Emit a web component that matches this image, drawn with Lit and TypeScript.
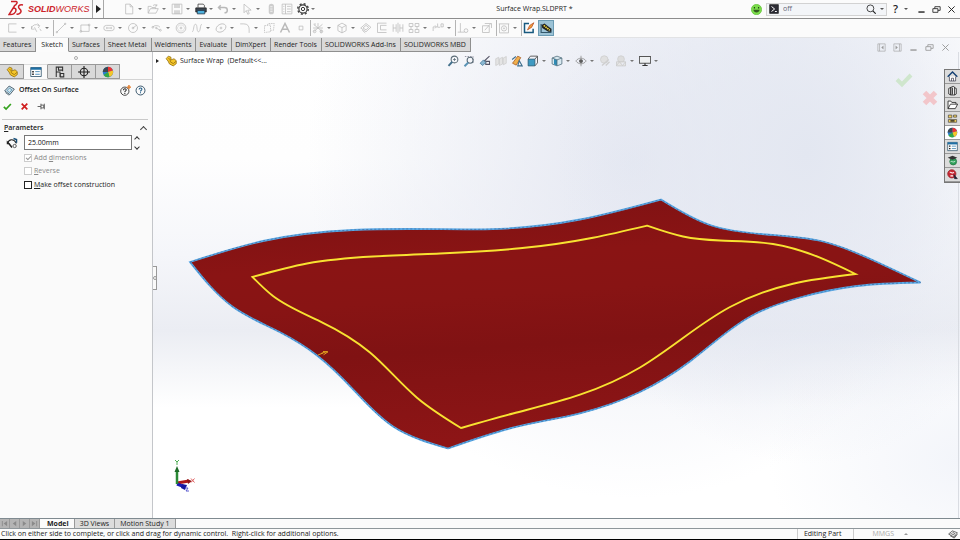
import { LitElement, html, svg, css, nothing } from "lit";
import { customElement, property } from "lit/decorators.js";
import { classMap } from "lit/directives/class-map.js";

type Pt = [number, number];

/* Natural cubic spline through unevenly spaced points; returned without the leading move. */
function curve(p: Pt[]): string {
  const n = p.length - 1;
  const seg = p.slice(1).map((q, i) => Math.hypot(q[0] - p[i][0], q[1] - p[i][1]));
  const tangents = (k: 0 | 1) => {
    const s = seg.map((h, i) => (p[i + 1][k] - p[i][k]) / h);
    const m = [...s, s[n - 1]];
    for (let pass = 0; pass < 40; pass++) {
      m[0] = (3 * s[0] - m[1]) / 2;
      for (let i = 1; i < n; i++) {
        const a = seg[i - 1];
        const b = seg[i];
        m[i] = (3 * (b * s[i - 1] + a * s[i]) - b * m[i - 1] - a * m[i + 1]) / (2 * (a + b));
      }
      m[n] = (3 * s[n - 1] - m[n - 1]) / 2;
    }
    return m;
  };
  const mx = tangents(0);
  const my = tangents(1);
  return seg
    .map((len, i) => {
      const h = len / 3;
      const [b, c] = [p[i], p[i + 1]];
      return `C${(b[0] + mx[i] * h).toFixed(2)} ${(b[1] + my[i] * h).toFixed(2)} `
        + `${(c[0] - mx[i + 1] * h).toFixed(2)} ${(c[1] - my[i + 1] * h).toFixed(2)} ${c[0]} ${c[1]}`;
    })
    .join("");
}
const outline = (sides: Pt[][]) => `M${sides[0][0].join(" ")}${sides.map(curve).join("")}Z`;

const EDGE = outline([
  [[190, 262], [263, 241], [353, 230], [440, 229.2], [500, 228.8], [580, 219.5], [661, 199.5]],
  [[661, 199.5], [710, 225], [767, 234.5], [823, 241.5], [877, 262], [920.5, 282.5]],
  [[920.5, 282.5], [857, 286], [800, 297.5], [750, 316.7], [690, 361.5], [640, 392], [580, 413.3], [513, 427.7], [448, 448.5]],
  [[448, 448.5], [393, 426.5], [353, 389.3], [317, 355.5], [280, 332.3], [233, 307], [190, 262]],
]);
const OFFSET = outline([
  [[252.5, 277], [307, 263.5], [373, 256.5], [440, 253.5], [520, 248.3], [593, 237.7], [647, 225.7]],
  [[647, 225.7], [683, 236.5], [720, 240.5], [773, 244], [820, 257.7], [855.5, 274]],
  [[855.5, 274], [793, 283.7], [730, 307], [683, 338], [640, 367.500], [580, 394.7], [513, 413.5], [461, 428]],
  [[461, 428], [417, 397.7], [370, 352.5], [320, 321.3], [273, 296], [252.5, 277]],
]);

const ICONS: Record<string, unknown> = {
  doc: svg`<path d="M3.500 1.500h6l3.500 3.500v9.500H3.500zM9.500 1.500v3.500H13"/>`,
  open: svg`<path d="M1.500 13.500v-9h4l1 1.500h5v2M1.500 13.500l3-6h10.500l-3 6zM8 3.500c2-2 4-1.500 5 .5M13 1.500V4h-2.500"/>`,
  save: svg`<path d="M1.500 1.500h13v13h-13z"/><path class="f" d="M4 1.500h8v5H4zM4 9.500h8v5H4z" opacity=".55"/>`,
  print: svg`<path d="M4 6V1.500h7l1.500 1.500v3" stroke="#333"/><path d="M1 6.500h14v5.500H1z" fill="#3c4650" stroke="#222"/><path d="M3 10h10v4.500H3z" fill="#4db0dd" stroke="#234"/>`,
  undo: svg`<path d="M5 3L2 6l3 3M2 6h8c5 0 5 7 0 7" stroke-width="2"/>`,
  pointer: svg`<path d="M4 1.500v11.500l3-3 2 5 2-1-2-4.500h4.500z"/>`,
  traffic: svg`<rect x="5" y="1" width="7" height="14" rx="3.500" class="f" opacity=".7"/><path d="M7 5h3M7 8h3M7 11h3" stroke="#fff"/>`,
  list: svg`<path d="M1.500 1.500h13v13h-13zM6 1.500v13M3 4.500h1.500M3 8h1.500M3 11.500h1.500M8 4.500h5M8 8h5M8 11.500h5"/>`,
  gear: svg`<circle cx="8" cy="8" r="5.500" stroke="#333" stroke-width="1.500"/><circle cx="8" cy="8" r="2.200" stroke="#333" stroke-width="1.300"/><circle cx="8" cy="8" r="7" stroke="#444" stroke-width="2" stroke-dasharray="2.700 2.800"/>`,
  profile: svg`<path d="M14 2.500H3.500v11H14"/>`,
  dims: svg`<path d="M2 9a6 6 0 0 1 10-4M2 5.500V9.500h4M6 7l3 6M10 2l3 3-2 3M13 9l2 3"/>`,
  line: svg`<path d="M2 14L14 2"/><circle cx="2.500" cy="13.500" r="1"/><circle cx="13.500" cy="2.500" r="1"/>`,
  rect: svg`<path d="M2.500 4h11v8.500h-11z"/><circle cx="2.500" cy="12.500" r="1.200"/><circle cx="13.500" cy="4" r="1.200"/>`,
  slot: svg`<rect x="1" y="4.500" width="14" height="7" rx="3.500"/><path d="M5 8h6M5 6.500v3M11 6.500v3"/>`,
  circle: svg`<circle cx="8" cy="8" r="6"/><circle cx="8" cy="8" r="1.200"/><path d="M8 8l5-4"/>`,
  arc: svg`<path d="M2 7a6 5 0 0 1 10 0M7 8l5 3"/><circle cx="2.500" cy="7" r="1.200"/><circle cx="12.500" cy="11" r="1.200"/><circle cx="7" cy="8" r="1"/>`,
  poly: svg`<circle cx="8" cy="8" r="6.500"/><path d="M5.500 4h5l2.500 4-2.500 4h-5L3 8z" opacity=".5"/><circle cx="8" cy="8" r="1.200"/>`,
  spline: svg`<path d="M1.500 13C4 13 3 3 6 3s1 10 4 10 2-10 4.500-10"/>`,
  ellipse: svg`<ellipse cx="8" cy="8" rx="7" ry="5" transform="rotate(-30 8 8)"/><circle cx="8" cy="8" r="1.200"/>`,
  fillet: svg`<path d="M1.500 2.500h5c5 0 7 3 7 7v5"/>`,
  plane: svg`<path d="M2 5l8-1v9l-8 1zM6 4l1-2h8l-1 9h-3" stroke-dasharray="2 1"/>`,
  letter: svg`<path d="M2 14L8 2l6 12M4.500 9.500h7" stroke-width="2"/>`,
  point: svg`<path d="M5.500 5.500h5v5h-5z"/>`,
  trim: svg`<path d="M2 3l12 10M2 13L14 3M1.500 8h13M8 1.500v5M4 1.500v3M12 11v4"/><circle cx="3.500" cy="12.500" r="1.800"/><circle cx="12.500" cy="12.500" r="1.800"/>`,
  cube: svg`<path d="M2.500 4.500L8 1.500l5.500 3v7L8 14.500l-5.500-3zM2.500 4.500L8 7.500l5.500-3M8 7.500v7"/>`,
  offsetPlane: svg`<path d="M1 8l7-6 6.500 5L8 13zM4 8l4-3.500L11.500 7 8 10.500zM3 11l4 3.500"/>`,
  offset: svg`<path d="M14 1.500H2v12.500h12M14 4.500H6v6h8"/>`,
  mirror: svg`<path d="M8 1v14M1.500 3v10M5.500 3v10M1.500 8h4M10.500 3v10M14.500 3v10M10.500 8h4"/>`,
  pattern: svg`<path d="M1.500 2h5v4h-5zM9.500 2h5v4h-5zM1.500 10h5v4h-5zM9.500 10h5v4h-5zM4 6v4M12 6v4"/>`,
  move: svg`<path d="M1.500 12V6.500H6M4 4.500l2 2-2 2M7.500 2v5h3.500M12 2.500h3v4h-3z"/>`,
  relation: svg`<path d="M4.500 1.500v12M1 13.500h9"/><circle cx="12" cy="11.500" r="2.500"/>`,
  repair: svg`<path d="M2 5h9v9H2zM5 11l8-9M5 2h9v6"/>`,
  snap: svg`<path d="M1 2.500h14M2 2.500v12h12v-12"/><circle cx="8" cy="8.500" r="3.500"/><circle cx="8" cy="8.500" r=".8"/>`,
  rapid: svg`<path d="M8 2H2v12h11.500V9" stroke="#17597f" stroke-width="2"/><path d="M6 10.500l3-6 5.500-3.500-3 6z" fill="#f2a23a" stroke="#b8491d"/>`,
  instant: svg`<path d="M1.500 2.500v11.500h13V9" stroke="#33586b" stroke-width="1.500"/><path d="M2 4l4-2 9 7v4h-4L3 8z" fill="#222" stroke="none"/><path d="M5 4.500l8 6.500" stroke="#f4dc3a" stroke-width="2.200" stroke-dasharray="2 1"/>`,
  part: svg`<path d="M1.500 5l3-3.500L8 3v3.500l4-1.500 3 2.500v4L11 14.500 6 12l-2-4z" fill="#f5c629" stroke="#8d6a0c"/><path d="M4.500 4.500L7 6v3l4 2.500 3.500-3" stroke="#8d6a0c"/>`,
  props: svg`<path d="M1 2h14v12H1z" fill="#fff" stroke="#1f4660"/><path d="M1 3.500h14" stroke="#1d6fa5" stroke-width="3"/><path d="M3 7.500h2M3 11h2" stroke="#111" stroke-width="2"/><path d="M7 7.500h6M7 11h6" stroke="#1d6fa5"/>`,
  config: svg`<path d="M3 14.500V1.500h8.500v5.500M3 8h5v6.500M6 1.500v4h5.500M8.500 10h4.500v4.500H8.500z" stroke="#333" stroke-width="1.400"/>`,
  target: svg`<circle cx="8" cy="8" r="5" stroke="#222" stroke-width="1.500"/><path d="M8 0v16M0 8h16" stroke="#222" stroke-width="1.500"/>`,
  ball: svg`<circle cx="8" cy="8" r="7" fill="#2b7fd0" stroke="none"/><path d="M8 8V1a7 7 0 0 0-7 7z" fill="#3d4852" stroke="none"/><path d="M8 8V1a7 7 0 0 1 6.500 5z" fill="#e33" stroke="none"/><path d="M8 8l6.500-2A7 7 0 0 1 10 14.700z" fill="#f5c629" stroke="none"/><path d="M8 8l2 6.700A7 7 0 0 1 2 12z" fill="#35a845" stroke="none"/>`,
  surf: svg`<path d="M1 8.500L7.500 1.500 15 6l-6.500 8z" fill="#d5e6ee" stroke="#2f4a5b" stroke-width="1.200"/><path d="M4.500 8L8 4.500 11.500 7 8 11z" stroke="#2f7ca5"/><path d="M2 11l5.500 4" stroke="#2f4a5b"/>`,
  helpNew: svg`<circle cx="7" cy="9" r="6" stroke="#333" stroke-width="1.300"/><path d="M5 7.500c0-3 4.500-2.500 4 0-.3 1.200-2 1.300-2 3M7 11.500v1.500" stroke="#222" stroke-width="1.500"/><path d="M13 0v6M10 3h6" stroke="#e07a28" stroke-width="2"/>`,
  help: svg`<circle cx="8" cy="8" r="6.500" stroke="#26465c" stroke-width="1.300"/><path d="M6 6.500c0-3 4.500-2.500 4 0-.3 1.200-2 1.300-2 3M8 10.500v1.500" stroke="#1c5a86" stroke-width="1.500"/>`,
  tick: svg`<path d="M1.500 8.500l4 4L14 3.500" stroke="#34a21d" stroke-width="3"/>`,
  cancel: svg`<path d="M3 3l10 10M13 3L3 13" stroke="#cf1d1d" stroke-width="3"/>`,
  pin: svg`<path d="M1 8h6M7 3v10M7 5.500h5v5H7M13 3v10" stroke="#555" stroke-width="1.600"/>`,
  measure: svg`<path d="M2 8.500c2-6 8-7 12 0" stroke="#222" stroke-width="1.500"/><path d="M1 4.500v5h5z" fill="#222" stroke="none"/><path d="M10 2l4 1.500v4" stroke="#174f78" stroke-width="2"/><path d="M4 9l4 5" stroke="#222" stroke-width="2"/><circle cx="11.500" cy="12" r="2.200" stroke="#555" stroke-width="1.300"/>`,
  zoomFit: svg`<circle cx="10" cy="6" r="4.500" stroke="#5a6b76" stroke-width="1.400"/><path d="M7 9l-5 5.500" stroke="#43708c" stroke-width="2.500"/><path d="M8 6h4M10 4v4" stroke="#5a6b76"/>`,
  zoomArea: svg`<path d="M2.500 2h11v10" stroke="#778" stroke-dasharray="2 1.500"/><circle cx="9.500" cy="7" r="4" stroke="#5a6b76" stroke-width="1.400"/><path d="M7 10l-5 5" stroke="#5a93b5" stroke-width="2.500"/>`,
  prev: svg`<path d="M6 9L14 1.500M9 8.500h5v4H9z" stroke="#556" stroke-width="1.400"/><path d="M1.500 11l4.500-4.500 3 3.500-4 4z" fill="#8bb8d2" stroke="#3f7595"/>`,
  section: svg`<path d="M1 5l4-2v9l-4 2zM6 5l4-2v9l-4 2zM11 4l4-2v9l-4 2z" fill="#e4e4e4" stroke="#ccc"/>`,
  dynamic: svg`<path d="M2 11l7-9.500 4 2-6 10z" fill="#f0b04c" stroke="#a5571e"/><path d="M9 14.500l2-7 4 7zM1.500 6l5-4" stroke="#3c6d8c" stroke-width="1.400"/>`,
  orient: svg`<path d="M1.500 5.500h9v9h-9z" fill="#3f9ac2" stroke="#24566f"/><path d="M1.500 5.500l3-4H14v9l-3.500 4M10.500 5.500L14 1.500" stroke="#555" stroke-width="1.200"/>`,
  style: svg`<path d="M1.500 4L8 1.500 14.500 4v8L8 14.500 1.500 12z" fill="#d8e8ef" stroke="#4a6878"/><path d="M4 5l4 1.500v7.500l-4-1.500z" fill="#2f8bb5" stroke="none"/><path d="M1.500 4L8 6.500 14.500 4M8 6.500v8" stroke="#4a6878"/>`,
  eye: svg`<path d="M1 8c4-5 10-5 14 0-4 5-10 5-14 0z" stroke="#888"/><circle cx="8" cy="8" r="2.500" fill="#444" stroke="none"/><path d="M8 1v14" stroke="#888"/>`,
  paint: svg`<circle cx="7" cy="6" r="5" fill="#e0e0e0" stroke="#ccc"/><path d="M4 14l9-8M9 14l5-5" stroke="#cfcfcf" stroke-width="2"/>`,
  scene: svg`<circle cx="8" cy="5.500" r="4.500" fill="#ddd" stroke="#ccc"/><path d="M2 9h12v5.500H2zM2 14l4-5 4 5 4-5" fill="#e6e6e6" stroke="#c8c8c8"/>`,
  monitor: svg`<path d="M.5 2h15v9H.5z" fill="#eef0f2" stroke="#555" stroke-width="1.400"/><path d="M8 11v3M4.500 14h7" stroke="#333" stroke-width="1.600"/>`,
  home: svg`<path d="M1 8.500L8 1.500l7 7" stroke="#123f73" stroke-width="2"/><path d="M3.500 8v6.500h9V8" fill="#fff" stroke="#334"/><path d="M6.500 14.500v-4h3v4" stroke="#334"/>`,
  library: svg`<path d="M2.500 5l3-1.500v11l-3-1.500zM5.500 3.500L9 2l2 1v11.500l-5.500 0zM11 4l2.500 1v8L11 14.500M8 4v10" fill="#eee" stroke="#222" stroke-width="1.200"/>`,
  folder: svg`<path d="M1.500 14V3h4l1.500 2h6v2.500M1.500 14L5 7.500h10.500L12 14z" fill="#fff" stroke="#222" stroke-width="1.200"/>`,
  palette: svg`<path d="M2 3h5v4H2zM9.500 3h4.500v3H9.500zM2 9.500h12v4H2z" fill="#f3cf5a" stroke="#444"/><path d="M5 11.500h6" stroke="#222" stroke-width="2"/>`,
  study: svg`<circle cx="9" cy="9.500" r="5" fill="#2fa35b" stroke="#1e6e3c"/><path d="M1 4l7-3 7 3-7 3z" fill="#333" stroke="none"/><path d="M5 10c2-2 4 2 7-1" stroke="#fff"/>`,
  forum: svg`<circle cx="7" cy="7" r="6" fill="#c92a35" stroke="#8e1720"/><path d="M4 5c2-2 3 3 6 0M5 10h4" stroke="#fff" stroke-width="1.500"/><path d="M10 8l5 6h-4z" fill="#223" stroke="#223"/>`,
  prevPane: svg`<path d="M1.500 1.500h13v13h-13zM4.500 1.500v13"/><path d="M11.500 4.500v7L7.500 8z" class="f"/>`,
  nextPane: svg`<path d="M1.500 1.500h13v13h-13zM11.500 1.500v13"/><path d="M4.500 4.500v7L8.500 8z" class="f"/>`,
  min: svg`<path d="M2.500 12.500h11" stroke-width="2.500"/>`,
  restore: svg`<path d="M1.500 6.500h9v6.500h-9zM5 6.500V3h9.500v6.500h-4" stroke-width="1.500"/>`,
  close: svg`<path d="M2.500 2.500l11 11M13.500 2.500l-11 11" stroke-width="1.700"/>`,
  search: svg`<circle cx="7" cy="7" r="5.500" stroke-width="1.300"/><path d="M11 11l4.500 4.500" stroke-width="1.800"/>`,
  smile: svg`<circle cx="8" cy="8" r="7.500" fill="#7bdc4b" stroke="#63c03a"/><path d="M3.500 8.500h9c-.5 5-8.500 5-9 0z" fill="#31591f" stroke="none"/><path d="M5 4.500v2M11 4.500v2" stroke="#234a17" stroke-width="1.700"/>`,
  prompt: svg`<path d="M1 1h14v14H1z" fill="#2d2d35" stroke="#111"/><path d="M4 4l5 4-5 4M9.500 12h3" stroke="#fff" stroke-width="1.600"/>`,
  sheets: svg`<path d="M1 8l6-5 8 3-5 7zM3 10.500l7 4 5-6M4 7l7 3M7 5l5 3" stroke="#444" stroke-width="1.200"/>`,
};

const icon = (name: string) =>
  html`<svg class="icon" viewBox="0 0 16 16" aria-hidden="true">${ICONS[name]}</svg>`;

const iconCss = css`
  .icon { width: 12px; height: 12px; flex: none; display: block; fill: none; stroke: currentColor; stroke-width: 1; }
  .icon .f { fill: currentColor; stroke: none; }
  button { appearance: none; border: 0; margin: 0; padding: 0; background: none; font: inherit; color: inherit; display: flex; align-items: center; }
`;

interface Tool { icon?: string; label?: string; menu?: boolean; bar?: boolean; state?: "on" | "small"; snug?: boolean }
const t = (icon: string, label: string, menu = false, extra: Partial<Tool> = {}): Tool => ({ icon, label, menu, ...extra });
const bar: Tool = { bar: true };

@customElement("tool-strip")
export class ToolStrip extends LitElement {
  @property({ attribute: false }) tools: Tool[] = [];
  static styles = [iconCss, css`
    :host { display: flex; align-items: center; color: #b9b9b9; }
    .tool { width: 16px; height: 16px; padding-left: 1px; box-sizing: border-box; }
    .menu { width: 24px; gap: 3px; }
    .menu.snug { width: 22px; gap: 2px; }
    .on { background: #9cc3d6; box-shadow: inset 0 0 0 1px #6b9bb3; padding-left: 2px; }
    .small { justify-content: center; }
    .small .icon { width: 9px; height: 9px; }
    .caret { border: 2px solid transparent; border-top-color: #777; border-bottom: 0; }
    .bar { width: 1px; height: 16px; background: #b4b4b4; }
  `];
  render() {
    return this.tools.map((x) =>
      x.bar
        ? html`<span class="bar"></span>`
        : html`<button aria-label=${x.label ?? ""} class=${classMap({ tool: true, menu: !!x.menu, snug: !!x.snug, on: x.state === "on", small: x.state === "small" })}>
            ${icon(x.icon!)}${x.menu ? html`<span class="caret"></span>` : nothing}
          </button>`);
  }
}

const FILE_TOOLS = [
  t("doc", "New", true), t("open", "Open", true), t("save", "Save", true),
  t("print", "Print", true, { snug: true }), t("undo", "Undo", true), t("pointer", "Select", true),
  t("traffic", "Rebuild"), t("list", "File properties"), t("gear", "Options", true, { snug: true }),
];
const SKETCH_TOOLS = [
  t("profile", "Exit sketch", true), t("dims", "Smart dimension", true), bar,
  t("line", "Line", true), t("rect", "Rectangle", true), t("slot", "Slot", true), t("circle", "Circle", true),
  t("arc", "Arc", true), t("poly", "Polygon"), t("spline", "Spline", true), t("ellipse", "Ellipse", true),
  t("fillet", "Fillet", true), t("plane", "Plane"), t("letter", "Sketch text"), t("point", "Point"), bar,
  t("trim", "Trim", true), t("cube", "Convert", true), t("offsetPlane", "Offset on surface"), t("offset", "Offset"),
  t("mirror", "Mirror"), t("pattern", "Pattern", true), t("move", "Move", true), bar,
  t("relation", "Relations", true), t("repair", "Repair"), bar, t("snap", "Quick snaps", true), bar,
  t("rapid", "Rapid sketch"), t("instant", "Instant 2D", false, { state: "on" }),
];
const VIEW_TOOLS = [
  t("zoomFit", "Zoom to fit"), t("zoomArea", "Zoom to area"), t("prev", "Previous view"), t("section", "Section view"),
  t("dynamic", "Dynamic annotation"), t("orient", "View orientation", true), t("style", "Display style", true),
  t("eye", "Hide or show", true), t("paint", "Edit appearance"), t("scene", "Apply scene", true), t("monitor", "View settings", true),
];
const DOC_TOOLS = [
  ["prevPane", "Previous pane"], ["nextPane", "Next pane"], ["min", "Minimize document"], ["restore", "Restore document"], ["close", "Close document"],
].map(([n, l]) => t(n, l, false, { state: "small" }));
const TABS = ["Features", "Sketch", "Surfaces", "Sheet Metal", "Weldments", "Evaluate", "DimXpert", "Render Tools", "SOLIDWORKS Add-Ins", "SOLIDWORKS MBD"];

@customElement("property-panel")
export class PropertyPanel extends LitElement {
  static styles = [iconCss, css`
    :host { display: flex; flex-direction: column; background: #fafafa; border-right: 1px solid #c4c6ca; font-size: 7px; line-height: 10px; color: #222; }
    .grip { height: 12px; display: flex; align-items: center; justify-content: center; }
    .grip i { width: 4px; height: 4px; border: 1px solid #aaa; border-radius: 50%; box-sizing: border-box; }
    .tabs { display: flex; height: 15px; border-bottom: 1px solid #d4d4d4; }
    .tabs button { width: 24px; justify-content: center; background: #d9d9d9; border: 1px solid #999; border-left: 0; box-sizing: border-box; }
    .tabs .on { background: #fafafa; border-top-color: #ddd; border-bottom-color: #fafafa; }
    .title { display: flex; align-items: center; gap: 4px; height: 20px; padding: 0 6px 0 4px; }
    h2, h3 { margin: 0; font-size: 7px; font-weight: 600; }
    h2 { flex: 1; }
    .title .icon { width: 11px; height: 11px; }
    .confirm { display: flex; gap: 8px; height: 12px; padding: 0 3px; align-items: center; }
    .confirm .icon { width: 9px; height: 9px; }
    .group { border-top: 1px solid #c9c9c9; margin: 7px 4px 0 2px; padding: 3px 0 0 2px; }
    .head { display: flex; justify-content: space-between; align-items: center; }
    .chev { width: 4px; height: 4px; border: solid #444; border-width: 1px 0 0 1px; rotate: 45deg; margin: 2px 2px 0 0; }
    .field { display: grid; grid-template-columns: 17px 108px 8px; gap: 3px; align-items: center; margin-top: 2px; height: 15px; }
    .field .icon { margin-left: 2px; }
    .field input { font: inherit; color: #111; height: 15px; min-width: 0; box-sizing: border-box; border: 1px solid #777; background: #fff; padding: 0 3px; margin: 0; outline: 0; }
    .spin { display: flex; flex-direction: column; gap: 5px; }
    .spin i { width: 4px; height: 4px; border: solid #333; border-width: 1px 0 0 1px; rotate: 45deg; box-sizing: border-box; }
    .spin button + button i { rotate: 225deg; }
    .spin button { height: 3px; }
    label { display: flex; align-items: center; gap: 2px; margin-left: 20px; height: 13px; }
    .off { color: #888; }
    .checks { margin-top: 1px; }
    .last { margin-top: 1px; }
    .checks input { appearance: none; width: 8px; height: 8px; margin: 0; box-sizing: border-box; border: 1px solid #222; background: #fff; display: grid; place-items: center; }
    .checks input:disabled { border-color: #ccc; }
    .checks input:checked::after { content: ""; width: 4px; height: 2px; border: solid #999; border-width: 0 0 1px 1px; rotate: -45deg; }
    u { text-underline-offset: 1px; text-decoration-thickness: 1px; }
  `];
  render() {
    return html`
      <div class="grip"><i></i></div>
      <div class="tabs">
        ${[["part", "Feature tree"], ["props", "Properties"], ["config", "Configurations"], ["target", "Dimensions"], ["ball", "Display"]].map(
          ([n, l]) => html`<button aria-label=${l} class=${classMap({ on: n === "props" })}>${icon(n)}</button>`)}
      </div>
      <div class="title">${icon("surf")}<h2>Offset On Surface</h2>
        <button aria-label="What's new">${icon("helpNew")}</button><button aria-label="Help">${icon("help")}</button></div>
      <div class="confirm">
        <button aria-label="OK">${icon("tick")}</button><button aria-label="Cancel">${icon("cancel")}</button><button aria-label="Keep visible">${icon("pin")}</button>
      </div>
      <section class="group">
        <div class="head"><h3><u>P</u>arameters</h3><i class="chev"></i></div>
        <div class="field">${icon("measure")}
          <input aria-label="Offset distance" value="25.00mm" />
          <span class="spin"><button aria-label="Increase"><i></i></button><button aria-label="Decrease"><i></i></button></span>
        </div>
        <div class="checks">
          <label class="off"><input type="checkbox" checked disabled /><span>Add <u>d</u>imensions</span></label>
          <label class="off"><input type="checkbox" disabled /><span><u>R</u>everse</span></label>
          <label class="last"><input type="checkbox" /><span><u>M</u>ake offset construction</span></label>
        </div>
      </section>`;
  }
}

@customElement("model-view")
export class ModelView extends LitElement {
  static styles = [iconCss, css`
    :host { display: block; position: relative; min-width: 0; border-right: 1px solid #d9dce2; font-size: 7px; }
    .scene { position: absolute; inset: 0; width: 100%; height: 100%; }
    .edge { fill: url(#red); stroke: #5aa9e6; stroke-width: 1.800; }
    .dark { fill: none; stroke: #3c6194; stroke-width: .6; stroke-dasharray: 2 2; }
    .offset { fill: none; stroke: #f8e231; stroke-width: 1.900; }
    .top { position: relative; display: grid; grid-template-columns: 293px 1fr; align-items: center; height: 18px; }
    .crumb { display: flex; align-items: center; gap: 3px; padding-left: 3px; color: #222; white-space: pre; }
    .arrow { border: 2px solid transparent; border-left: 3px solid #222; border-right: 0; margin-right: 3px; }
    .corner { position: absolute; }
    .yes { right: 45px; top: 18px; width: 18px; height: 18px; stroke: #cfe6cd; }
    .no { right: 19px; top: 37px; width: 18px; height: 18px; stroke: #f2c6ca; }
    .handle { position: absolute; left: 0; top: 46%; width: 4px; height: 24px; border: 1px solid #999; border-left: 0; box-sizing: border-box; background: #fafafa; display: grid; place-items: center; }
    .handle i { width: 2px; height: 2px; border: 1px solid #999; border-radius: 50%; }
    .triad { position: absolute; left: 18px; bottom: 24px; width: 28px; height: 36px; }
    .tasks { position: absolute; right: -2px; top: 17px; border: 1px solid #777; border-right: 0; width: 16px; box-sizing: border-box; }
    .tasks button { width: 100%; height: 14px; box-sizing: border-box; justify-content: center; background: #dcdcdc; border-bottom: 1px solid #999; }
    .tasks .on { background: #fff; }
    .tasks .icon { width: 11px; height: 11px; }
  `];
  render() {
    return html`
      <svg class="scene" viewBox="153 52 805 466" aria-label="Red surface with an offset curve">
        <defs><linearGradient id="red" x1="0" y1="0" x2=".2" y2="1">
          <stop offset="0" stop-color="#7c1113"/><stop offset=".3" stop-color="#8a1414"/><stop offset=".45" stop-color="#881414"/>
          <stop offset=".65" stop-color="#801213"/><stop offset="1" stop-color="#8d1516"/></linearGradient></defs>
        <path class="edge" d=${EDGE} /><path class="dark" d=${EDGE} /><path class="offset" d=${OFFSET} />
        <path d="M318 355l5-2M323 351.500l5 .3-4.500 3M321 353.500l6-2" fill="none" stroke="#e0a020" />
      </svg>
      <div class="top">
        <div class="crumb"><i class="arrow"></i>${icon("part")}<span>Surface Wrap  (Default&lt;&lt;...</span></div>
        <tool-strip .tools=${VIEW_TOOLS}></tool-strip>
      </div>
      <svg class="corner yes icon" viewBox="0 0 18 18"><path d="M2 9.500l5 5L16 5" stroke-width="4"/></svg>
      <svg class="corner no icon" viewBox="0 0 18 18"><path d="M3.500 3.500l11 11M14.500 3.500l-11 11" stroke-width="5"/></svg>
      <div class="handle"><i></i></div>
      <svg class="triad" viewBox="171 458 28 36" fill="none">
        <path d="M177 483l12-2" stroke="#b01818" stroke-width="3"/><path d="M187 479l5 2-4 3z" fill="#8d1515"/>
        <path d="M177 484l8 3" stroke="#1b1bb5" stroke-width="3"/><path d="M182 484l5 1-2 5-4-2z" fill="#16169c"/>
        <path d="M177 484v-13" stroke="#2b8a35" stroke-width="2.500"/><path d="M174.500 472l2.500-6 2.500 6z" fill="#1d6b27"/>
        <path d="M175 460l2 2 2-2M177 462v3" stroke="#4fae55"/><path d="M191 478.500l3.500 4M194.500 478.500l-3.500 4" stroke="#e06060"/><path d="M185 488h3l-2 3h3" stroke="#5a5ad0"/>
      </svg>
      <div class="tasks">
        ${[["home", "Resources"], ["library", "Design library"], ["folder", "File explorer"], ["palette", "View palette"], ["ball", "Appearances"], ["props", "Custom properties"], ["study", "Tutorials"], ["forum", "Forum"]].map(
          ([n, l]) => html`<button aria-label=${l} class=${classMap({ on: n === "ball" })}>${icon(n)}</button>`)}
      </div>`;
  }
}

@customElement("app-root")
export class AppRoot extends LitElement {
  static styles = [iconCss, css`
    :host { display: flex; flex-direction: column; min-height: 100vh; box-sizing: border-box; border-bottom: 1px solid #000; background: #fbfbfb; font-family: "Open Sans", "Noto Sans", sans-serif; font-size: 7px; line-height: 10px; color: #222; }
    header { display: grid; grid-template-columns: auto 1fr auto; height: 18px; border-bottom: 1px solid #8d8d8d; align-items: center; }
    .left { display: flex; align-items: center; height: 100%; }
    .logo { display: flex; align-items: center; gap: 4px; width: 84px; padding-left: 8px; height: 100%; border-right: 1px solid #a8a8a8; color: #cc2229; font: italic 9px "Liberation Sans", sans-serif; white-space: nowrap; }
    .logo svg { width: 16px; height: 18px; flex: none; fill: none; stroke: #cc2229; stroke-width: 1.500; }
    .expand { width: 11px; height: 100%; justify-content: center; border-right: 1px solid #a8a8a8; margin-right: 18px; }
    .expand i { border: 4px solid transparent; border-left: 5px solid #222; border-right: 0; }
    .name { text-align: center; white-space: pre; }
    .right { display: flex; align-items: center; justify-content: flex-end; gap: 4px; padding-right: 3px; color: #222; }
    .right > .icon { width: 11px; height: 11px; }
    .find { display: flex; align-items: center; gap: 4px; width: 121px; height: 13px; box-sizing: border-box; border: 1px solid #d2d2d2; background: #f3f5f8; padding: 0 2px; margin-right: 2px; }
    .find .icon { width: 10px; height: 10px; }
    .find input { flex: 1; min-width: 0; border: 0; background: none; padding: 0; margin: 0; font: inherit; color: #667; outline: 0; }
    .caret { border: 2px solid transparent; border-top-color: #555; border-bottom: 0; }
    .q { font-size: 11px; font-weight: 600; gap: 6px; margin-right: 4px; }
    .right .win .icon { width: 9px; height: 9px; }
    .win { width: 11px; justify-content: center; }
    .ribbon { display: flex; height: 19px; padding-left: 5px; border-bottom: 1px solid #e2e3e5; box-sizing: border-box; }
    .work { flex: 1; display: flex; flex-direction: column;
      background:
        radial-gradient(ellipse 26% 65% at 84% 24%, #e3e7f1 0, #e3e7f1a0 45%, #e3e7f100 100%),
        radial-gradient(ellipse 34% 70% at 66% 26%, #e5e8f2 0, #e5e8f290 45%, #e5e8f200 100%),
        radial-gradient(ellipse 20% 30% at 100% 88%, #f3f5fa, #f3f5fa00),
        linear-gradient(#fff 0, #fefefe 25%, #f5f6fa 45%, #ebedf3 61%, #fff 77%); }
    nav { display: flex; height: 14px; }
    nav button { height: 14px; box-sizing: border-box; justify-content: center; padding: 0 4px 0 3px; background: #d9d9d9; border: solid #8f8f8f; border-width: 0 1px 1px 0; white-space: nowrap; }
    nav .on { background: #fbfbfb; border-bottom-color: #fbfbfb; padding: 0 5px; }
    nav tool-strip { margin-left: auto; padding: 4px 7px 0 0; color: #999; }
    .body { flex: 1; display: grid; grid-template-columns: 153px 1fr; margin-right: 1px; }
    .sheets { display: flex; height: 11px; border-top: 1px solid #7f8a90; border-bottom: 1px solid #8f979b; box-sizing: border-box; }
    .sheets button { padding: 0 5px; background: #dcdcdc; border-right: 1px solid #999; line-height: 9px; white-space: nowrap; }
    .sheets .step { width: 10px; padding: 0; justify-content: center; background: #b4b4b4; color: #8a8a8a; }
    .sheets .on { background: #fbfbfb; font-weight: 700; padding: 0 5px 0 7px; }
    .step .icon { width: 7px; height: 7px; }
    footer { display: flex; align-items: center; height: 10px; padding: 0 2px 0 1px; white-space: pre; }
    footer .msg { flex: 1; }
    .mode { border: solid #ccc; border-width: 0 1px; padding: 0 12px 0 6px; margin-right: 18px; }
    .units { color: #aaa; gap: 10px; margin-right: 40px; }
    .up { border: 2px solid transparent; border-bottom-color: #999; border-top: 0; }
    footer > .icon { width: 10px; height: 10px; }
  `];
  render() {
    const step = (label: string, d: string) =>
      html`<button class="step" aria-label=${label}><svg class="icon" viewBox="0 0 8 8"><path class="f" d=${d} /></svg></button>`;
    return html`
      <header>
        <div class="left">
          <div class="logo">
            <svg viewBox="0 0 16 18"><path d="M3 1.500h5c2 0 1 3-2 4.500M6.500 6L1 14.500c4 .5 7-1.500 7-4.500 0-1.500-1-2-3-2M15 5c-2-.5-4.500 0-4.500 2 0 2 3 2.500 2.500 4.500-.4 2-2.500 3-4.500 2.500"/></svg>
            <span><b>SOLID</b>WORKS</span>
          </div>
          <button class="expand" aria-label="Show menu"><i></i></button>
          <tool-strip .tools=${FILE_TOOLS}></tool-strip>
        </div>
        <span class="name">Surface Wrap.SLDPRT *</span>
        <div class="right">
          ${icon("smile")}
          <div class="find">${icon("prompt")}<input aria-label="Search commands" value="off" />${icon("search")}<i class="caret"></i></div>
          <button class="q">?<i class="caret"></i></button>
          ${[["min", "Minimize"], ["restore", "Restore"], ["close", "Close"]].map(([n, l]) => html`<button class="win" aria-label=${l}>${icon(n)}</button>`)}
        </div>
      </header>
      <div class="ribbon"><tool-strip .tools=${SKETCH_TOOLS}></tool-strip></div>
      <div class="work">
        <nav>
          ${TABS.map((x) => html`<button class=${classMap({ on: x === "Sketch" })}>${x}</button>`)}
          <tool-strip .tools=${DOC_TOOLS}></tool-strip>
        </nav>
        <div class="body"><property-panel></property-panel><model-view></model-view></div>
      </div>
      <div class="sheets">
        ${step("First", "M1 1h1v6H1zM7 1v6L3 4z")}${step("Previous", "M6 1v6L2 4z")}${step("Next", "M2 1v6l4-3z")}${step("Last", "M6 1h1v6H6zM1 1v6l4-3z")}
        <button class="on">Model</button><button>3D Views</button><button>Motion Study 1</button>
      </div>
      <footer>
        <span class="msg">Click on either side to complete, or click and drag for dynamic control.  Right-click for additional options.</span>
        <span class="mode">Editing Part</span>
        <button class="units">MMGS<i class="up"></i></button>
        ${icon("sheets")}
      </footer>`;
  }
}
